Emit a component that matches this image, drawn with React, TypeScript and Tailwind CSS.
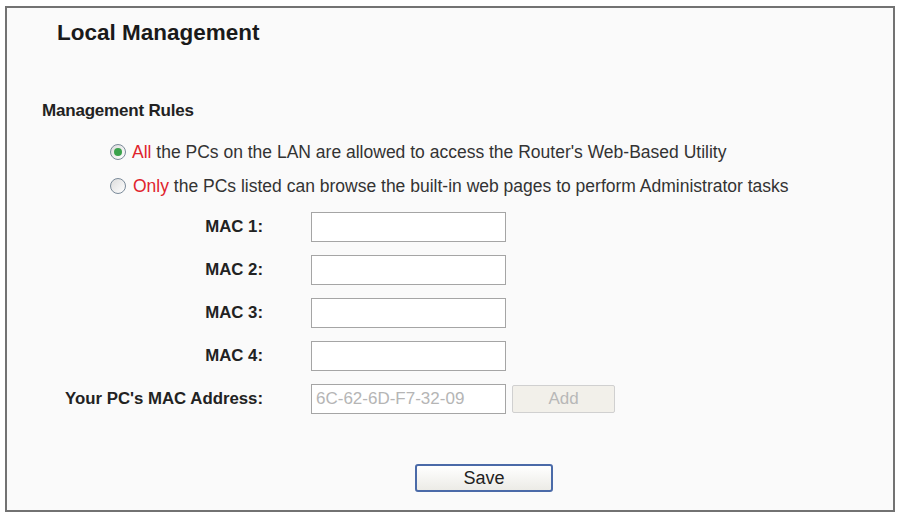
import React from "react";

const font = { fontFamily: '"Liberation Sans", Arial, sans-serif' };

const macRows = ["MAC 1:", "MAC 2:", "MAC 3:", "MAC 4:"];

function Radio({ checked }: { checked?: boolean }) {
  return (
    <span className="flex h-[16px] w-[16px] shrink-0 items-center justify-center rounded-full border border-[#7a8a99] bg-gradient-to-br from-[#dcdcdc] to-white">
      {checked && <span className="h-[8px] w-[8px] rounded-full bg-[#3aa24c]" />}
    </span>
  );
}

export default function App() {
  return (
    <div className="h-[515px] w-[898px] bg-white pl-[5px] pt-[6px]" style={font}>
      <div className="h-[506px] w-[890px] border-2 border-[#727272] bg-[#fafafa] text-[#222]">
        <h1 className="pl-[50px] pt-[12px] text-[22.5px] font-bold leading-[26px] text-[#1a1a1a]">
          Local Management
        </h1>

        <h2 className="mt-[55px] pl-[35px] text-[17px] font-bold leading-[20px] tracking-[-0.2px] text-[#222]">
          Management Rules
        </h2>

        <div className="mt-[21px] flex flex-col gap-[14px] pl-[103px] text-[17.5px] leading-[20px] text-[#333]">
          <label className="flex items-center gap-[6px]">
            <Radio checked />
            <span>
              <span className="text-[#e0242c]">All</span> the PCs on the LAN are allowed to access the Router's Web-Based Utility
            </span>
          </label>
          <label className="flex items-center gap-[7px]">
            <Radio />
            <span>
              <span className="text-[#e0242c]">Only</span> the PCs listed can browse the built-in web pages to perform Administrator tasks
            </span>
          </label>
        </div>

        <div className="mt-[16px] grid grid-cols-[256px_195px_auto] items-center gap-x-[48px] gap-y-[13px] text-[16.8px] font-bold text-[#222]">
          {macRows.map((m) => (
            <React.Fragment key={m}>
              <span className="text-right">{m}</span>
              <input className="h-[30px] w-[195px] border border-[#a5a5a5] bg-white" />
              <span />
            </React.Fragment>
          ))}
          <span className="text-right">Your PC's MAC Address:</span>
          <input
            readOnly
            value="6C-62-6D-F7-32-09"
            className="h-[30px] w-[195px] border border-[#a5a5a5] bg-white px-[4px] text-[17px] font-normal text-[#b5b5b5]"
          />
          <button className="-ml-[42px] h-[28px] w-[103px] rounded-[2px] border border-[#d0d0d0] bg-[#f2f0ea] text-[17px] font-normal text-[#b8b8b8]">
            Add
          </button>
        </div>

        <div className="mt-[50px] flex pl-[408px]">
          <button className="h-[28px] w-[138px] rounded-[3px] border-2 border-[#4a6aa8] bg-gradient-to-b from-white to-[#ecebe6] text-[18px] leading-[20px] text-[#222]">
            Save
          </button>
        </div>
      </div>
    </div>
  );
}
